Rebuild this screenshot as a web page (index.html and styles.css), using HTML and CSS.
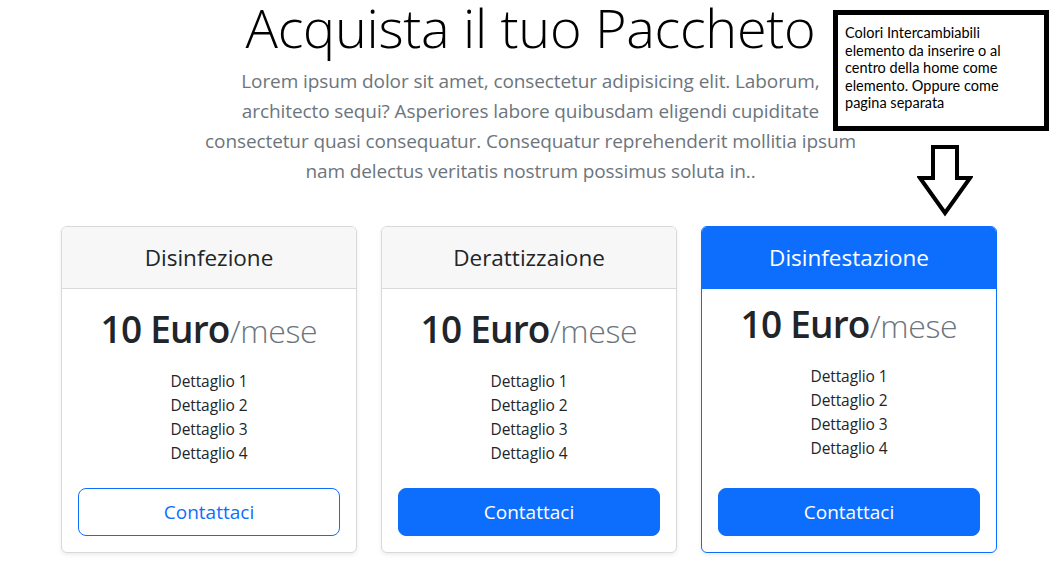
FILE: index.html
```html
<!DOCTYPE html>
<html lang="it">
<head>
<meta charset="utf-8">
<title>Acquista il tuo Paccheto</title>
<link rel="stylesheet" href="styles.css">
</head>
<body>
<main class="page">
  <header class="intro">
    <h1 class="intro-title">Acquista il tuo Paccheto</h1>
    <p class="intro-lead">Lorem ipsum dolor sit amet, consectetur adipisicing elit. Laborum,<br>architecto sequi? Asperiores labore quibusdam eligendi cupiditate<br>consectetur quasi consequatur. Consequatur reprehenderit mollitia ipsum<br>nam delectus veritatis nostrum possimus soluta in..</p>
  </header>

  <section class="plans">
    <article class="card">
      <div class="card-header"><h4 class="card-name">Disinfezione</h4></div>
      <div class="card-body">
        <h2 class="price">10 Euro<small class="price-unit">/mese</small></h2>
        <ul class="details">
          <li>Dettaglio 1</li>
          <li>Dettaglio 2</li>
          <li>Dettaglio 3</li>
          <li>Dettaglio 4</li>
        </ul>
        <button class="btn btn-outline" type="button">Contattaci</button>
      </div>
    </article>
    <article class="card">
      <div class="card-header"><h4 class="card-name">Derattizzaione</h4></div>
      <div class="card-body">
        <h2 class="price">10 Euro<small class="price-unit">/mese</small></h2>
        <ul class="details">
          <li>Dettaglio 1</li>
          <li>Dettaglio 2</li>
          <li>Dettaglio 3</li>
          <li>Dettaglio 4</li>
        </ul>
        <button class="btn btn-primary" type="button">Contattaci</button>
      </div>
    </article>
    <article class="card card-featured">
      <div class="card-header"><h4 class="card-name">Disinfestazione</h4></div>
      <div class="card-body">
        <h2 class="price">10 Euro<small class="price-unit">/mese</small></h2>
        <ul class="details">
          <li>Dettaglio 1</li>
          <li>Dettaglio 2</li>
          <li>Dettaglio 3</li>
          <li>Dettaglio 4</li>
        </ul>
        <button class="btn btn-primary" type="button">Contattaci</button>
      </div>
    </article>
  </section>

  <aside class="note">Colori Intercambiabili elemento da inserire o al centro della home come elemento. Oppure come pagina separata</aside>
  <svg class="note-arrow" width="56" height="72" viewBox="0 0 56 72" aria-hidden="true">
    <path d="M16 2 H40 V33 H53 L28 68 L3 33 H16 Z" fill="#fff" stroke="#000" stroke-width="4" stroke-linejoin="miter"/>
  </svg>
</main>
</body>
</html>
```
FILE: styles.css
```css
* { box-sizing: border-box; }

html, body {
  margin: 0;
  background: #fff;
}

body {
  font-family: "Open Sans", "Noto Sans", sans-serif;
  color: #212529;
}

.page {
  position: relative;
  width: 1061px;
  height: 576px;
  overflow: hidden;
}

.intro {
  text-align: center;
}

.intro-title {
  margin: 0;
  font-size: 54px;
  font-weight: 300;
  letter-spacing: -0.3px;
  line-height: 54px;
  color: #000;
}

.intro-lead {
  margin: 12px 0 0;
  font-size: 19px;
  font-weight: 400;
  letter-spacing: -0.1px;
  line-height: 30px;
  color: #6c757d;
}

.plans {
  display: grid;
  grid-template-columns: repeat(3, 1fr);
  gap: 24px;
  width: 936px;
  margin: 40px 0 0 61px;
}

.card {
  display: flex;
  flex-direction: column;
  border: 1px solid #d9d9da;
  border-radius: 6px;
  background: #fff;
  box-shadow: 0 2px 4px rgba(0, 0, 0, 0.075);
  overflow: hidden;
}

.card-header {
  padding: 16px;
  background: #f7f7f7;
  border-bottom: 1px solid #d9d9da;
  text-align: center;
}

.card-name {
  margin: 0;
  font-size: 22.5px;
  font-weight: 400;
  line-height: 29px;
}

.card-body {
  display: flex;
  flex-direction: column;
  flex: 1;
  padding: 16px;
  text-align: center;
}

.price {
  margin: 0 0 14px;
  font-size: 37px;
  font-weight: 600;
  letter-spacing: -0.8px;
  line-height: 48px;
  color: #212529;
}

.price-unit {
  font-size: 32px;
  font-weight: 300;
  letter-spacing: -0.3px;
  color: #6c757d;
}

.details {
  list-style: none;
  margin: 0 0 23px;
  padding: 0;
  font-size: 15.5px;
  letter-spacing: -0.1px;
  line-height: 24px;
}

.btn {
  margin-top: auto;
  width: 100%;
  height: 48px;
  border: 1px solid #0d6efd;
  border-radius: 8px;
  font-family: inherit;
  font-size: 19px;
  line-height: 1;
  cursor: pointer;
}

.btn-outline {
  background: #fff;
  color: #0d6efd;
}

.btn-primary {
  background: #0d6efd;
  color: #fff;
}

.card-featured {
  border-color: #0d6efd;
}

.card-featured .card-header {
  background: #0d6efd;
  border-bottom-color: #0d6efd;
  color: #fff;
}

.card-featured .card-body {
  padding-top: 11px;
}

.note {
  position: absolute;
  left: 833px;
  top: 10px;
  width: 216px;
  height: 121px;
  padding: 9px 28px 0 7px;
  border: 5px solid #000;
  background: #fff;
  font-family: "Lato", "Open Sans", sans-serif;
  font-size: 14.5px;
  line-height: 17.5px;
  color: #000;
}

.note-arrow {
  position: absolute;
  left: 917px;
  top: 145px;
}
```
